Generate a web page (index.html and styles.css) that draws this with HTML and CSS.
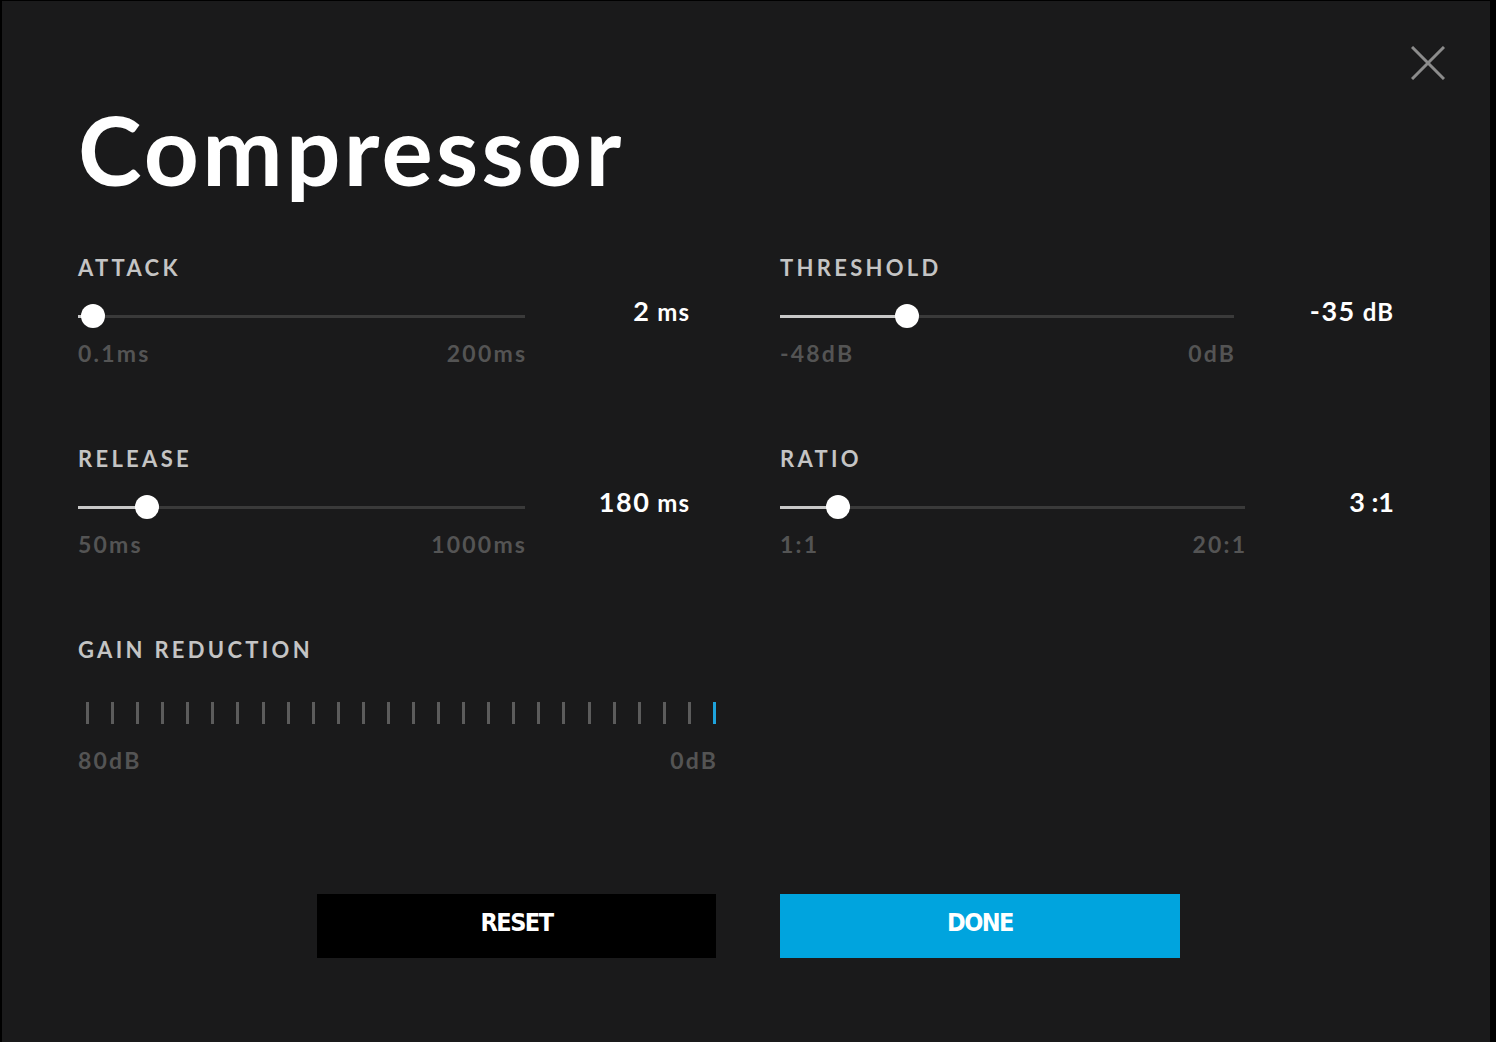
FILE: index.html
```html
<!DOCTYPE html>
<html lang="en">
<head>
<meta charset="utf-8">
<title>Compressor</title>
<link rel="stylesheet" href="styles.css">
</head>
<body>
<div class="window">
  <button class="close" aria-label="Close">
    <svg viewBox="0 0 34 34" width="34" height="34"><path d="M1 1 L33 33 M33 1 L1 33" stroke="#8c8c8c" stroke-width="3" fill="none"/></svg>
  </button>
  <h1 class="title">Compressor</h1>

  <div class="controls">
    <div class="control">
      <div class="label">ATTACK</div>
      <div class="slider-row">
        <div class="slider s-447">
          <div class="fill" style="width:3.4%"></div>
          <div class="thumb" style="left:3.4%"></div>
        </div>
        <div class="value"><span class="num">2</span><span class="unit">ms</span></div>
      </div>
      <div class="range s-447"><span>0.1ms</span><span>200ms</span></div>
    </div>

    <div class="control">
      <div class="label">THRESHOLD</div>
      <div class="slider-row">
        <div class="slider s-454">
          <div class="fill" style="width:28%"></div>
          <div class="thumb" style="left:28%"></div>
        </div>
        <div class="value"><span class="num">-35</span><span class="unit">dB</span></div>
      </div>
      <div class="range s-454"><span>-48dB</span><span>0dB</span></div>
    </div>

    <div class="control">
      <div class="label">RELEASE</div>
      <div class="slider-row">
        <div class="slider s-447">
          <div class="fill" style="width:15.4%"></div>
          <div class="thumb" style="left:15.4%"></div>
        </div>
        <div class="value"><span class="num">180</span><span class="unit">ms</span></div>
      </div>
      <div class="range s-447"><span>50ms</span><span>1000ms</span></div>
    </div>

    <div class="control">
      <div class="label">RATIO</div>
      <div class="slider-row">
        <div class="slider s-465">
          <div class="fill" style="width:12.4%"></div>
          <div class="thumb" style="left:12.4%"></div>
        </div>
        <div class="value"><span class="num ratio">3 :1</span></div>
      </div>
      <div class="range s-465"><span>1:1</span><span>20:1</span></div>
    </div>

    <div class="control gain">
      <div class="label">GAIN REDUCTION</div>
      <div class="meter">
        <i></i><i></i><i></i><i></i><i></i><i></i><i></i><i></i><i></i><i></i><i></i><i></i><i></i>
        <i></i><i></i><i></i><i></i><i></i><i></i><i></i><i></i><i></i><i></i><i></i><i></i><i class="on"></i>
      </div>
      <div class="range meter-range"><span>80dB</span><span>0dB</span></div>
    </div>
  </div>

  <div class="actions">
    <button class="btn reset">RESET</button>
    <button class="btn done">DONE</button>
  </div>
</div>
</body>
</html>
```

FILE: styles.css
```css
html, body {
  margin: 0;
  padding: 0;
  background: #000;
}
body {
  width: 1496px;
  height: 1042px;
  overflow: hidden;
  font-family: Lato, "Noto Sans", sans-serif;
}
.window {
  position: relative;
  box-sizing: border-box;
  margin: 1px 6px 0 2px;
  height: 1041px;
  background: #1a1a1b;
  padding: 98px 0 0 76px;
}
.close {
  position: absolute;
  top: 45px;
  left: 1409px;
  width: 34px;
  height: 34px;
  padding: 0;
  border: 0;
  background: none;
}
.close svg { display: block; }
.title {
  margin: 0;
  font-size: 96px;
  line-height: 100px;
  font-weight: 700;
  color: #fff;
  letter-spacing: 3.3px;
}
.controls {
  display: grid;
  grid-template-columns: 612px 614px;
  column-gap: 90px;
  row-gap: 82px;
  margin-top: 57px;
}
.label {
  font-size: 22px;
  line-height: 24px;
  font-weight: 700;
  color: #c4c4c4;
  letter-spacing: 3.3px;
}
.slider-row {
  display: flex;
  align-items: center;
  justify-content: space-between;
  height: 24px;
  margin-top: 24px;
}
.slider {
  position: relative;
  height: 3px;
  background: #3a3a3a;
}
.s-447 { width: 447px; }
.s-454 { width: 454px; }
.s-465 { width: 465px; }
.fill {
  position: absolute;
  left: 0;
  top: 0;
  height: 3px;
  background: #c8c8c8;
}
.thumb {
  position: absolute;
  top: 50%;
  width: 24px;
  height: 24px;
  margin: -12px 0 0 -12px;
  border-radius: 50%;
  background: #fff;
}
.value {
  color: #fff;
  font-weight: 700;
  white-space: nowrap;
  line-height: 24px;
  position: relative;
  top: -3px;
}
.num {
  font-size: 27px;
  letter-spacing: 1.5px;
}
.num.ratio {
  letter-spacing: 0;
}
.unit {
  margin-left: 7px;
  font-size: 24px;
  letter-spacing: 1px;
}
.range {
  display: flex;
  justify-content: space-between;
  margin-top: 13px;
  font-size: 23px;
  line-height: 24px;
  font-weight: 700;
  color: #545454;
  letter-spacing: 2.2px;
}
.range span:last-child {
  margin-right: -2.2px;
}
.meter {
  display: flex;
  justify-content: space-between;
  width: 630px;
  margin: 40px 0 0 8px;
  height: 22px;
}
.meter i {
  display: block;
  width: 3px;
  height: 22px;
  background: #5c5c5c;
}
.meter i.on { background: #1ea3dc; }
.meter-range {
  width: 638px;
  margin-top: 24px;
}
.actions {
  display: flex;
  gap: 64px;
  margin: 122px 0 0 239px;
}
.btn {
  width: 399px;
  height: 64px;
  border: 0;
  padding: 0 0 8px;
  color: #fff;
  font-family: "DejaVu Sans Condensed", "DejaVu Sans", sans-serif;
  font-weight: 700;
  font-size: 25px;
  letter-spacing: -1.5px;
}
.reset { background: #000; }
.done { background: #00a4de; width: 400px; }
```
